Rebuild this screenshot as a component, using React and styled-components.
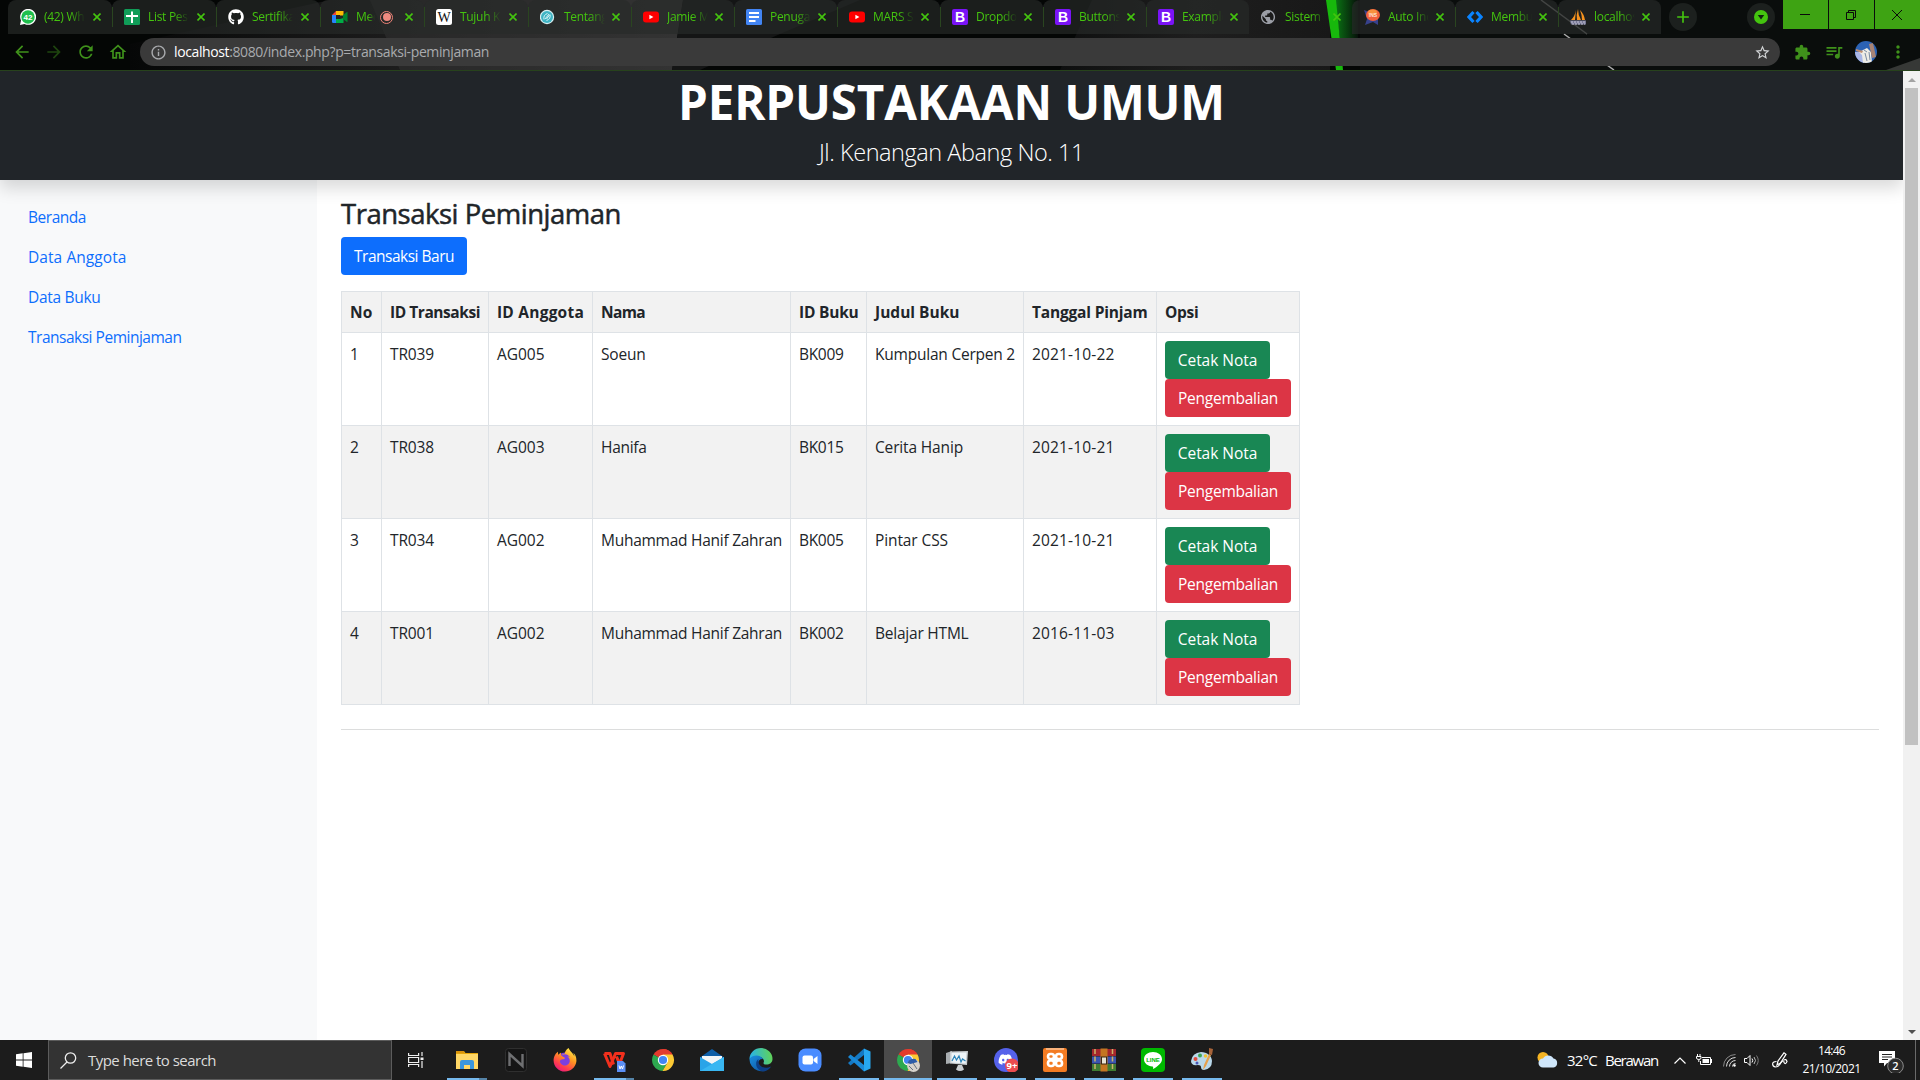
import React, { useLayoutEffect, useRef } from "react";
import styled, { createGlobalStyle, css } from "styled-components";
import {
  MdArrowBack, MdArrowForward, MdRefresh, MdOutlineHome, MdInfoOutline, MdStarBorder,
  MdExtension, MdQueueMusic, MdMoreVert, MdAdd, MdPublic,
} from "react-icons/md";
import { FaGithub, FaFirefoxBrowser, FaDiscord } from "react-icons/fa";

const Global = createGlobalStyle`
  *, *::before, *::after { box-sizing: border-box; }
  body { margin: 0; background: #fff; overflow: hidden; }
  svg { display: block; flex: none; }
`;

const FONT = `"Segoe UI", "Open Sans", "Noto Sans", sans-serif`;
const GREEN = "#44c40f";
const ICON_GREEN = "#3f911b";

const FitSpan = styled.span`
  display: inline-block;
  white-space: nowrap;
`;

/* Tracks text so that it occupies the given advance width. */
function Fit({ w, children }) {
  const ref = useRef(null);
  useLayoutEffect(() => {
    const el = ref.current;
    el.style.letterSpacing = "0px";
    const natural = el.getBoundingClientRect().width;
    el.style.letterSpacing = `${(w - natural) / el.textContent.length}px`;
  }, [w, children]);
  return <FitSpan ref={ref}>{children}</FitSpan>;
}

const Screen = styled.div`
  width: 1920px;
  height: 1080px;
  display: grid;
  grid-template-rows: 71px 969px 40px;
  font-family: ${FONT};
  overflow: hidden;
`;

/* ---------- browser chrome ---------- */
const Chrome = styled.header`
  position: relative;
  display: flex;
  flex-direction: column;
  background: #050706;
  border-bottom: 1px solid #27421c;
  isolation: isolate;
`;
const ThemeArt = styled.svg`
  position: absolute;
  inset: 0;
  z-index: -1;
`;
const TabStrip = styled.div`
  height: 34px;
  display: flex;
  align-items: stretch;
  padding-left: 8px;
`;
const Tab = styled.div`
  width: ${(p) => p.$w}px;
  flex: none;
  display: flex;
  align-items: center;
  padding-left: 12px;
  position: relative;
  color: ${GREEN};
  border-radius: 8px 8px 0 0;
  background: ${(p) => (p.$active ? "transparent" : "rgba(40, 42, 41, 0.66)")};
  ${(p) => p.$divided && css`
    &::after {
      content: "";
      position: absolute;
      right: -1px;
      top: 7px;
      width: 1px;
      height: 20px;
      background: #2f7a10;
    }
  `}
`;
const Favicon = styled.span`
  width: 16px;
  height: 16px;
  margin-right: 8px;
  flex: none;
`;
const TabTitle = styled.span`
  width: ${(p) => p.$w}px;
  flex: none;
  overflow: hidden;
  white-space: nowrap;
  font-size: 12px;
  line-height: 18px;
  letter-spacing: -0.3px;
  mask-image: linear-gradient(90deg, #000 62%, transparent 100%);
`;
const Recording = styled.span`
  width: 13px;
  height: 13px;
  margin-left: 5px;
  border: 1px solid #ee8277;
  border-radius: 50%;
  padding: 1.5px;
  &::before {
    content: "";
    display: block;
    height: 100%;
    border-radius: 50%;
    background: #f08a80;
  }
`;
const TabClose = styled.span`
  width: 8px;
  margin-left: auto;
  margin-right: 11px;
`;
const RoundButton = styled.span`
  width: 28px;
  height: 28px;
  margin: 3px 0 0 ${(p) => p.$ml}px;
  border-radius: 50%;
  background: #1c201e;
  display: grid;
  place-items: center;
`;
const WindowButtons = styled.div`
  display: flex;
  gap: 1px;
  margin-left: auto;
  height: 29px;
`;
const WindowButton = styled.span`
  width: 45px;
  padding-right: 1px;
  background: #3ea313;
  display: grid;
  place-items: center;
`;
const Toolbar = styled.div`
  height: 36px;
  display: flex;
  align-items: center;
  color: ${ICON_GREEN};
`;
const ToolCell = styled.span`
  width: 32px;
  display: grid;
  place-items: center;
  opacity: ${(p) => (p.$dim ? 0.45 : 1)};
`;
const NavGroup = styled.div`
  display: flex;
  padding-left: 6px;
  width: 140px;
`;
const Omnibox = styled.div`
  width: 1640px;
  height: 28px;
  border-radius: 14px;
  background: #3a3a3a;
  display: flex;
  align-items: center;
  padding: 0 9px 0 10px;
  color: #a9abae;
  font-size: 14px;
`;
const Url = styled.span`
  margin-left: 7px;
  line-height: 20px;
  flex: 1;
`;
const Host = styled.span`
  color: #fff;
`;
const ExtGroup = styled.div`
  display: flex;
  padding-left: 6px;
`;

const CloseMark = () => (
  <svg width="8" height="8" viewBox="0 0 8 8">
    <path d="M0.500 0.500l7 7M7.500 0.500l-7 7" stroke="currentColor" strokeWidth="1.600" />
  </svg>
);
const B = () => (
  <svg width="16" height="16" viewBox="0 0 16 16">
    <rect width="16" height="16" rx="2" fill="#7a13f7" />
    <text x="8" y="13" textAnchor="middle" fill="#fff" fontFamily="Liberation Sans, sans-serif" fontWeight="700" fontSize="14">B</text>
  </svg>
);
const YouTube = () => (
  <svg width="16" height="16" viewBox="0 0 16 16">
    <rect y="2.5" width="16" height="11" rx="3" fill="#f00" />
    <path d="M6.4 5.7v4.6L10.4 8z" fill="#fff" />
  </svg>
);
const FAVICONS = {
  whatsapp: (
    <svg width="16" height="16" viewBox="0 0 16 16">
      <path d="M0 16l1-4.500A8 8 0 1 1 4.500 15z" fill="#fff" />
      <circle cx="8" cy="8" r="6.700" fill="#1fbf4d" />
      <text x="8" y="11" textAnchor="middle" fill="#fff" fontFamily="Liberation Sans, sans-serif" fontWeight="700" fontSize="8">42</text>
    </svg>
  ),
  sheets: (
    <svg width="16" height="16" viewBox="0 0 16 16">
      <rect width="16" height="16" rx="1.500" fill="#109d58" />
      <path d="M7 2.500h2V6h5v2H9v6H7V8H2V6h5z" fill="#fff" />
    </svg>
  ),
  github: <FaGithub size={16} color="#fff" />,
  meet: (
    <svg width="16" height="16" viewBox="0 0 16 16">
      <path d="M0 6l4-4v4z" fill="#ea4335" />
      <path d="M4 2h7.500v4.500H8V6H4z" fill="#fbbc04" />
      <path d="M0 6h4v8H1.200Q0 14 0 12.800z" fill="#2684fc" />
      <path d="M4 10h4l3.500-1v5H4z" fill="#00ac47" />
      <path d="M11 6l4-3q1 0 .5 1v8q.5 1-.5 1l-4-3z" fill="#00832d" />
    </svg>
  ),
  wiki: (
    <svg width="16" height="16" viewBox="0 0 16 16">
      <rect width="16" height="16" rx="2.500" fill="#fff" />
      <text x="8" y="13" textAnchor="middle" fill="#111" fontFamily="Liberation Serif, serif" fontSize="14">W</text>
    </svg>
  ),
  teal: (
    <svg width="16" height="16" viewBox="0 0 16 16">
      <circle cx="7" cy="8" r="7.200" fill="#d7f0f3" />
      <circle cx="7" cy="8" r="6" fill="#40b4c4" />
      <path d="M4 10.500Q3 6 7.500 4.500M10 5.500q1 4.500-3.500 6M5 10l4-5M6.500 10l3-4" stroke="#d8f3f6" strokeWidth="1" fill="none" />
    </svg>
  ),
  youtube: <YouTube />,
  docs: (
    <svg width="16" height="16" viewBox="0 0 16 16">
      <rect width="16" height="16" rx="1.500" fill="#4285f4" />
      <path d="M3 3h10v2H3zM3 7h10v2H3zM3 11h6.500v2H3z" fill="#fff" />
    </svg>
  ),
  bootstrap: <B />,
  globe: (
    <svg width="16" height="16" viewBox="0 0 16 16">
      <MdPublic x="-1.500" y="-0.500" size={17} color="#9b9ea6" />
    </svg>
  ),
  ins: (
    <svg width="16" height="16" viewBox="0 0 16 16">
      <path d="M0 1l5 2 9 0 0 13-5-3-8 3 2-6z" fill="#37418c" />
      <ellipse cx="9" cy="6" rx="7" ry="6" fill="#f2603c" />
      <ellipse cx="8.500" cy="3.500" rx="4.500" ry="3" fill="#f8913e" />
      <text x="9" y="8" textAnchor="middle" fill="#ffe0d0" fontFamily="Liberation Sans, sans-serif" fontWeight="700" fontSize="5">INS</text>
    </svg>
  ),
  code: (
    <svg width="16" height="16" viewBox="0 0 16 16">
      <path d="M6.500 3L2 8l4.500 5M9.500 3L14 8l-4.500 5" stroke="#0a84ff" strokeWidth="3.200" fill="none" />
    </svg>
  ),
  pma: (
    <svg width="16" height="16" viewBox="0 0 16 16">
      <path d="M6 1Q5 7 1 11h4zM8 0q-2 6-1 11l4 0Q8 6 8 0zM10 1q4 4 5 10h-3q0-5-2-10z" fill="#f6921e" />
      <path d="M0 11.500h16v4H1z" fill="#777796" />
      <path d="M1 13h14M2 15h13" stroke="#c7c7d6" strokeWidth="1" strokeDasharray="2 1" />
    </svg>
  ),
};

const TABS = [
  ["whatsapp", "(42) WhatsApp"], ["sheets", "List Peserta"], ["github", "Sertifikat"],
  ["meet", "Meet", "rec"], ["wiki", "Tujuh Keajaiban"], ["teal", "Tentang"],
  ["youtube", "Jamie Miller"], ["docs", "Penugasan"], ["youtube", "MARS SMK"],
  ["bootstrap", "Dropdowns"], ["bootstrap", "Buttons"], ["bootstrap", "Example"],
  ["globe", "Sistem", "active"], ["ins", "Auto Inc"], ["code", "Membuat"],
  ["pma", "localhost"],
];

const Art = () => (
  <ThemeArt width="1920" height="70" viewBox="0 0 1920 70">
    <defs>
      <linearGradient id="grayL" x1="0" x2="1">
        <stop offset="0" stopColor="#060707" /><stop offset="0.5" stopColor="#1d1d1d" /><stop offset="1" stopColor="#333" />
      </linearGradient>
      <linearGradient id="grayM" x1="0" x2="1">
        <stop offset="0" stopColor="#0e0f0f" /><stop offset="0.5" stopColor="#1e1e1e" /><stop offset="1" stopColor="#181818" />
      </linearGradient>
      <linearGradient id="glow" x1="0" x2="1">
        <stop offset="0" stopColor="#0a7a14" /><stop offset="1" stopColor="#07100a" />
      </linearGradient>
    </defs>
    <rect width="1920" height="70" fill="#040605" />
    <path d="M130 44L330 0H683L672 70H130z" fill="url(#grayL)" />
    <path d="M370 0H683L672 70H400z" fill="#333" fillOpacity="0.5" />
    <path d="M683 0H860L780 34 700 70H672z" fill="#141515" />
    <path d="M1092 0H1330V70H1060z" fill="url(#grayM)" />
    <path d="M1334 0H1358V38H1340z" fill="url(#glow)" />
    <path d="M1326 0h10l7 70h-7z" fill="#17b80c" />
    <path d="M1360 0H1920V70H1360z" fill="#0a0d0c" />
    <path d="M1541 0L1587 34" stroke="#777" strokeWidth="1.500" />
    <path d="M1564 34l50 36" stroke="#aaa" strokeWidth="1.500" />
    <path d="M1886 70L1920 58V70z" fill="#363836" />
  </ThemeArt>
);

const BrowserChrome = () => (
  <Chrome>
    <Art />
    <TabStrip>
      {TABS.map(([icon, title, flag], i) => (
        <Tab key={i} $w={i < 5 ? 104 : 103} $active={flag === "active"} $divided={i !== 11 && i !== 12 && i !== 15}>
          <Favicon>{FAVICONS[icon]}</Favicon>
          <TabTitle $w={flag === "rec" ? 19 : 41}>{title}</TabTitle>
          {flag === "rec" && <Recording />}
          <TabClose><CloseMark /></TabClose>
        </Tab>
      ))}
      <RoundButton $ml={8}><MdAdd size={20} color={GREEN} /></RoundButton>
      <RoundButton $ml={50}>
        <svg width="14" height="14" viewBox="0 0 14 14">
          <circle cx="7" cy="7" r="7" fill={GREEN} />
          <path d="M3.800 5h6.400L7 9.500z" fill="#122010" />
        </svg>
      </RoundButton>
      <WindowButtons>
        <WindowButton><svg width="10" height="10"><path d="M0 4.500h10" stroke="#0a0a0a" /></svg></WindowButton>
        <WindowButton>
          <svg width="10" height="10"><path d="M.5 2.500h7v7h-7zM2.500 2.500v-2h7v7h-2" fill="none" stroke="#0a0a0a" /></svg>
        </WindowButton>
        <WindowButton><svg width="10" height="10"><path d="M0 0l10 10M10 0L0 10" stroke="#0a0a0a" /></svg></WindowButton>
      </WindowButtons>
    </TabStrip>
    <Toolbar>
      <NavGroup>
        <ToolCell><MdArrowBack size={20} /></ToolCell>
        <ToolCell $dim><MdArrowForward size={20} /></ToolCell>
        <ToolCell><MdRefresh size={20} /></ToolCell>
        <ToolCell><MdOutlineHome size={20} /></ToolCell>
      </NavGroup>
      <Omnibox>
        <MdInfoOutline size={17} />
        <Url><Fit w={315}><Host>localhost</Host>:8080/index.php?p=transaksi-peminjaman</Fit></Url>
        <MdStarBorder size={17} color="#d2d4d6" />
      </Omnibox>
      <ExtGroup>
        <ToolCell><MdExtension size={17} /></ToolCell>
        <ToolCell><MdQueueMusic size={20} /></ToolCell>
        <ToolCell>
          <svg width="22" height="22" viewBox="0 0 22 22">
            <defs><clipPath id="av"><circle cx="11" cy="11" r="11" /></clipPath></defs>
            <g clipPath="url(#av)">
              <rect width="22" height="22" fill="#2b62b4" />
              <path d="M0 11h9v11H0z" fill="#a9b6e6" />
              <path d="M8 9l4-2 4 4 1 11H8L7 14 4 11z" fill="#eeece6" />
              <path d="M14 3l4-1 3 14-4 1z" fill="#a88374" />
              <path d="M1 8l7 2-1 2-6-2z" fill="#c08f72" />
              <path d="M10 12l2 8M14 11l1 8M9 9l3 2" stroke="#5d7291" strokeWidth="0.800" />
            </g>
          </svg>
        </ToolCell>
        <ToolCell><MdMoreVert size={20} /></ToolCell>
      </ExtGroup>
    </Toolbar>
  </Chrome>
);

/* ---------- page ---------- */
const Viewport = styled.div`
  display: grid;
  grid-template-columns: 1903px 17px;
`;
const Page = styled.div`
  display: flex;
  flex-direction: column;
  overflow: hidden;
  color: #212529;
  font-size: 15.500px;
  line-height: 25px;
  background: #fff;
`;
const Banner = styled.div`
  height: 109px;
  flex: none;
  background: #212529;
  color: #fff;
  display: flex;
  flex-direction: column;
  align-items: center;
  box-shadow: 0 8px 16px rgba(0, 0, 0, 0.15);
  z-index: 1;
`;
const BannerTitle = styled.h1`
  margin: 2px 0 0;
  font-size: 47.500px;
  line-height: 58px;
  font-weight: 700;
`;
const BannerText = styled.p`
  margin: 3px 0 0;
  font-size: 23.500px;
  line-height: 36px;
  font-weight: 300;
`;
const Columns = styled.div`
  flex: 1;
  display: grid;
  grid-template-columns: 317px 1fr;
`;
const Sidebar = styled.nav`
  background: #f8f9fa;
  padding: 16px 12px;
  display: flex;
  flex-direction: column;
`;
const NavLink = styled.a`
  padding: 9px 16px 6px;
  height: 40px;
  color: #0d6efd;
`;
const Main = styled.main`
  padding: 17px 24px 0;
  display: flex;
  flex-direction: column;
  align-items: flex-start;
`;
const Heading = styled.h3`
  margin: 0 0 6px;
  font-size: 27.500px;
  line-height: 34px;
  font-weight: 500;
  -webkit-text-stroke: 0.500px currentColor;
`;
const TONES = { primary: "#0d6efd", success: "#198754", danger: "#dc3545" };
const Button = styled.button`
  display: flex;
  align-items: center;
  justify-content: center;
  width: ${(p) => p.$w}px;
  height: 38px;
  padding: 0;
  border: 0;
  border-radius: 4px;
  background: ${(p) => TONES[p.$tone]};
  color: #fff;
  font: inherit;
`;
const Table = styled.table`
  margin-top: 16px;
  width: 959px;
  table-layout: fixed;
  border-collapse: collapse;
  tr:nth-child(odd) { background: #fff; }
  tr:nth-child(even), thead tr:nth-child(n) { background: #f2f2f2; }
`;
const HeadCell = styled.th`
  height: 41px;
  padding: 8px 8px 7px;
  border: 1px solid #dee2e6;
  text-align: left;
  font-weight: 700;
`;
const Cell = styled.td`
  height: 93px;
  padding: ${(p) => (p.$actions ? 8 : 9)}px 8px 8px;
  border: 1px solid #dee2e6;
  vertical-align: top;
`;
const Rule = styled.hr`
  width: 1538px;
  height: 1px;
  margin: 24px 0 0;
  border: 0;
  background: #dcdddd;
`;
const Scrollbar = styled.div`
  background: #f1f1f1;
  display: flex;
  flex-direction: column;
  align-items: center;
`;
const ScrollArrow = styled.span`
  width: 17px;
  height: 17px;
  margin-top: ${(p) => (p.$end ? "auto" : 0)};
  display: grid;
  place-items: center;
`;
const Thumb = styled.div`
  width: 13px;
  height: 657px;
  background: #c1c1c1;
`;

const LINKS = [["Beranda", 58], ["Data Anggota", 98.5], ["Data Buku", 72.5], ["Transaksi Peminjaman", 153.5]];
const COLS = [
  ["No", 40, 22.5], ["ID Transaksi", 107, 90], ["ID Anggota", 104, 87], ["Nama", 198, 44],
  ["ID Buku", 76, 59.5], ["Judul Buku", 157, 84.5], ["Tanggal Pinjam", 133, 115.5], ["Opsi", 143, 33.5],
];
const ROWS = [
  ["1", "TR039", "AG005", ["Soeun", 44.5], "BK009", ["Kumpulan Cerpen 2", 140], "2021-10-22"],
  ["2", "TR038", "AG003", ["Hanifa", 45.5], "BK015", ["Cerita Hanip", 88], "2021-10-21"],
  ["3", "TR034", "AG002", ["Muhammad Hanif Zahran", 181], "BK005", ["Pintar CSS", 73], "2021-10-21"],
  ["4", "TR001", "AG002", ["Muhammad Hanif Zahran", 181], "BK002", ["Belajar HTML", 93.5], "2016-11-03"],
];
const CELL_WIDTHS = [9, 44, 47.5, null, 44.5, null, 82.5];

const WebPage = () => (
  <Viewport>
    <Page>
      <Banner>
        <BannerTitle><Fit w={547}>PERPUSTAKAAN UMUM</Fit></BannerTitle>
        <BannerText><Fit w={265}>Jl. Kenangan Abang No. 11</Fit></BannerText>
      </Banner>
      <Columns>
        <Sidebar>
          {LINKS.map(([t, w]) => <NavLink key={t}><Fit w={w}>{t}</Fit></NavLink>)}
        </Sidebar>
        <Main>
          <Heading><Fit w={280}>Transaksi Peminjaman</Fit></Heading>
          <Button $tone="primary" $w={126}><Fit w={100}>Transaksi Baru</Fit></Button>
          <Table>
            <colgroup>{COLS.map(([n, w]) => <col key={n} width={w} />)}</colgroup>
            <thead>
              <tr>{COLS.map(([n, , tw]) => <HeadCell key={n}><Fit w={tw}>{n}</Fit></HeadCell>)}</tr>
            </thead>
            <tbody>
              {ROWS.map((r) => (
                <tr key={r[0]}>
                  {r.map((c, i) => (
                    <Cell key={i}>
                      {Array.isArray(c) ? <Fit w={c[1]}>{c[0]}</Fit> : <Fit w={CELL_WIDTHS[i]}>{c}</Fit>}
                    </Cell>
                  ))}
                  <Cell $actions>
                    <Button $tone="success" $w={105}><Fit w={79.500}>Cetak Nota</Fit></Button>
                    <Button $tone="danger" $w={126}><Fit w={100}>Pengembalian</Fit></Button>
                  </Cell>
                </tr>
              ))}
            </tbody>
          </Table>
          <Rule />
        </Main>
      </Columns>
    </Page>
    <Scrollbar>
      <ScrollArrow><svg width="8" height="4"><path d="M0 4l4-4 4 4z" fill="#a3a3a3" /></svg></ScrollArrow>
      <Thumb />
      <ScrollArrow $end><svg width="8" height="4"><path d="M0 0l4 4 4-4z" fill="#505050" /></svg></ScrollArrow>
    </Scrollbar>
  </Viewport>
);

/* ---------- taskbar ---------- */
const Taskbar = styled.footer`
  display: flex;
  background: #1c1c1c;
  color: #fff;
`;
const Slot = styled.span`
  width: ${(p) => p.$w}px;
  margin-right: ${(p) => p.$mr || 0}px;
  flex: none;
  height: 40px;
  display: grid;
  place-items: center;
`;
const SearchBox = styled.div`
  width: 344px;
  background: #333;
  border: 1px solid #5c5c5c;
  display: flex;
  align-items: center;
  padding-left: 11px;
  gap: 11px;
  color: #dcdcdc;
  font-size: 15px;
`;
const TaskButton = styled.span`
  width: 49px;
  height: 40px;
  padding-right: 1px;
  display: flex;
  flex-direction: column;
  align-items: center;
  justify-content: flex-end;
  background: ${(p) => (p.$active ? "#4b4b4b" : "transparent")};
  background-clip: content-box;
`;
const Glyph = styled.span`
  height: 38px;
  width: 24px;
  display: grid;
  place-items: center;
  padding-top: 2px;
`;
const Underline = styled.span`
  width: ${(p) => (p.$kind === "active" ? 48 : 40)}px;
  height: 2px;
  background: ${(p) =>
    !p.$kind ? "transparent"
      : p.$kind === "multi" ? "linear-gradient(90deg, #76b9ed 32px, #5584a8 32px)"
        : "#76b9ed"};
`;
const Tray = styled.div`
  margin-left: auto;
  display: flex;
  font-size: 15px;
  align-items: center;
`;
const Clock = styled.div`
  width: 71px;
  display: flex;
  flex-direction: column;
  align-items: center;
  font-size: 12px;
  line-height: 18px;
  padding-bottom: 1px;
`;
const TrayText = styled.span`
  width: ${(p) => p.$w}px;
  line-height: 20px;
`;
const ShowDesktop = styled.span`
  width: 5px;
  height: 40px;
  border-left: 1px solid #6a6a6a;
`;

const ChromeLogo = ({ children }) => (
  <svg width="24" height="24" viewBox="0 0 24 24">
    <path d="M12 12L2.500 6.500A11 11 0 0 1 21.500 6.500z" fill="#e33b2e" />
    <path d="M12 1a11 11 0 0 1 9.500 5.500H12z" fill="#e33b2e" />
    <path d="M12 12L2.500 6.500A11 11 0 0 0 11.500 23l5-8.500z" fill="#2da94f" />
    <path d="M12 12l4.500 2.500L11.500 23A11 11 0 0 0 21.500 6.500H12z" fill="#fcc934" />
    <circle cx="12" cy="12" r="5.200" fill="#fff" />
    <circle cx="12" cy="12" r="4.100" fill="#4285f4" />
    {children}
  </svg>
);

const APPS = [
  ["multi", <svg width="24" height="24" viewBox="0 0 24 24">
    <path d="M1 3h8l1.500 2H23v16H1z" fill="#e5a50a" /><path d="M1 6h22v15H1z" fill="#ffd766" />
    <path d="M5 21v-7q0-2 2-2h10q2 0 2 2v7h-4v-4H9v4z" fill="#3a96dd" /><path d="M1 3h8v2H1z" fill="#d9930b" />
  </svg>],
  [null, <svg width="24" height="24" viewBox="0 0 24 24">
    <rect x="1.500" y="0.500" width="21" height="23" rx="3" fill="#151515" stroke="#2f2f2f" />
    <path d="M5.500 18V6l13 12V6" fill="none" stroke="#6f7072" strokeWidth="2.400" />
  </svg>],
  [null, <svg width="24" height="24" viewBox="0 0 24 24">
    <defs>
      <linearGradient id="ff" x1="0.800" y1="0" x2="0.200" y2="1">
        <stop offset="0" stopColor="#fff44f" /><stop offset="0.400" stopColor="#ff9620" />
        <stop offset="0.750" stopColor="#ff3b4f" /><stop offset="1" stopColor="#e31587" />
      </linearGradient>
    </defs>
    <circle cx="12" cy="12.500" r="8" fill="#7a3fe0" />
    <FaFirefoxBrowser x="0" y="0" size={24} fill="url(#ff)" />
  </svg>],
  ["multi", <svg width="24" height="24" viewBox="0 0 24 24">
    <path d="M2.500 5.500H8l3.500 11" fill="none" stroke="#f2301d" strokeWidth="3" strokeLinejoin="round" />
    <path d="M2.500 5.500L8 18.500 13.500 5.500H21.500L17.500 16 14.500 8.500" fill="none" stroke="#f2301d" strokeWidth="3" strokeLinejoin="round" />
    <path d="M15 13h6l2.500 2.500V24H15z" fill="#5b8ff5" />
    <path d="M17 17.500l1 3.500 1.300-3 1.200 3 1-3.500" fill="none" stroke="#fff" strokeWidth="1" />
  </svg>],
  [null, <ChromeLogo />],
  [null, <svg width="24" height="24" viewBox="0 0 24 24">
    <path d="M0 9.500L12 1l12 8.500V22H0z" fill="#0f5fa8" /><path d="M2 8h20v8H2z" fill="#f3f6f8" />
    <path d="M0 9l12 7L24 9v14H0z" fill="#2aa4e8" /><path d="M0 23l24-14v14z" fill="#39b7f2" />
  </svg>],
  [null, <svg width="24" height="24" viewBox="0 0 24 24">
    <defs>
      <linearGradient id="eg" x1="0" y1="0.300" x2="1" y2="0.200"><stop offset="0" stopColor="#28b3e8" /><stop offset="1" stopColor="#62d453" /></linearGradient>
      <linearGradient id="eb" x1="0" y1="0" x2="1" y2="1"><stop offset="0" stopColor="#1a8fe0" /><stop offset="1" stopColor="#0c4a94" /></linearGradient>
    </defs>
    <path d="M0.500 11A11.500 11 0 0 1 23.500 11C23.500 15 20 17 16 16.500 14 16 14.500 14.500 15 13.500 15 9 8 6 0.500 11z" fill="url(#eg)" />
    <path d="M0.500 11C4 6 12 7 14 11 10 10.500 8 14 10 18 12 21 18 22 22 18.500A12 12 0 0 1 0.500 11z" fill="url(#eb)" />
    <path d="M9.500 11C5 14 7 23 15 23.500 18 23 20.500 21 22 18.500 16 22 8 18 9.500 11z" fill="#0d3f86" />
  </svg>],
  [null, <svg width="24" height="24" viewBox="0 0 24 24">
    <rect x="0.500" y="0.500" width="23" height="23" rx="7" fill="#4a8cff" /><rect x="4.500" y="7.500" width="10.500" height="9" rx="2" fill="#fff" />
    <path d="M15.500 11l4-3v8l-4-3z" fill="#fff" />
  </svg>],
  ["open", <svg width="24" height="24" viewBox="0 0 24 24">
    <path d="M17 0.500l6.500 3v17l-6.500 3z" fill="#27a7f0" /><path d="M17 0.500L1 15l2.500 2.500L17 7z" fill="#1479c4" />
    <path d="M17 23.500L1 9l2.500-2.500L17 17z" fill="#1989d8" />
  </svg>],
  ["active", <ChromeLogo>
    <circle cx="17.500" cy="17.500" r="6.500" fill="#d6d2cc" /><path d="M11.500 15q2-5 8-4l2 3-7 2z" fill="#2c5ca8" />
    <path d="M13 18l4 4M17 15l4 6" stroke="#62717f" />
  </ChromeLogo>],
  ["open", <svg width="24" height="24" viewBox="0 0 24 24">
    <path d="M1 5l6-2v12l-6 1z" fill="#a9aeb1" /><path d="M5 3.500L23 3l-1 14-17-1.500z" fill="#c9ced1" />
    <path d="M6.500 5L21.500 4.500l-.8 11-14.200-1z" fill="#edf4f8" /><path d="M7 13l2.500-5 2 4 2.500-4 2 6 1.500-3 3 2" fill="none" stroke="#2b83b8" strokeWidth="1.200" />
    <path d="M13 17h4l2 4.500q-4 3-8 0z" fill="#c9cdd0" />
  </svg>],
  ["open", <svg width="24" height="24" viewBox="0 0 24 24">
    <circle cx="12" cy="12" r="12" fill="#5561ea" /><FaDiscord x="4" y="4" size={15} color="#fff" />
    <circle cx="18" cy="17.500" r="7" fill="#ec4c4e" />
    <text x="18" y="21" textAnchor="middle" fill="#fff" fontSize="9.500" fontWeight="700" fontFamily="Open Sans, sans-serif">9+</text>
  </svg>],
  ["open", <svg width="24" height="24" viewBox="0 0 24 24">
    <rect width="24" height="24" rx="2" fill="#f37b22" /><rect x="3" y="0" width="18" height="2" fill="#f9b27b" />
    <rect x="5" y="6" width="6" height="5" rx="2.500" fill="none" stroke="#fff" strokeWidth="2.600" />
    <rect x="13" y="6" width="6" height="5" rx="2.500" fill="none" stroke="#fff" strokeWidth="2.600" />
    <rect x="5" y="12.500" width="6" height="5.500" rx="2.500" fill="none" stroke="#fff" strokeWidth="2.600" />
    <rect x="13" y="12.500" width="6" height="5.500" rx="2.500" fill="none" stroke="#fff" strokeWidth="2.600" />
    <path d="M10 13.500L14 10" stroke="#fff" strokeWidth="3" />
  </svg>],
  ["open", <svg width="24" height="24" viewBox="0 0 24 24">
    <rect y="1" width="24" height="7" fill="#a3262c" /><rect y="8.500" width="24" height="7" fill="#3a54b0" /><rect y="16" width="24" height="7" fill="#3f7c32" />
    <path d="M3 1v22M20.500 1v22" stroke="#cbb46a" strokeWidth="1.500" strokeDasharray="5 2.500" />
    <rect x="8.500" y="0.500" width="7" height="23" fill="#c47522" /><rect x="9.500" y="9" width="5" height="7" fill="#e9e4d5" stroke="#3b2a14" />
  </svg>],
  ["open", <svg width="24" height="24" viewBox="0 0 24 24">
    <rect width="24" height="24" rx="4" fill="#00b900" />
    <path d="M12 4c5 0 9 3 9 7.200 0 4-5 7.600-9 9.800.3-1.500.3-2.500-.5-2.600C6.500 18 3 15 3 11.200 3 7 7 4 12 4z" fill="#fff" />
    <text x="12" y="13.500" textAnchor="middle" fill="#00b900" fontSize="6" fontWeight="700" fontFamily="Liberation Sans, sans-serif">LINE</text>
  </svg>],
  ["open", <svg width="24" height="24" viewBox="0 0 24 24">
    <path d="M11 4C17 4 22 8 22 13q0 8-8 9-3 0-3-3 0-2-3-2-7 1-7-4Q2 5 11 4z" fill="#b9d8ea" />
    <circle cx="5.500" cy="11" r="2" fill="#df4a3c" /><circle cx="10" cy="7.500" r="2" fill="#3ca556" />
    <circle cx="15.500" cy="8" r="1.800" fill="#f0c22f" /><circle cx="7" cy="15" r="1.500" fill="#4a58b6" />
    <path d="M21 7l-5 11-3 4 1-5 5-11z" fill="#e6a04a" /><path d="M19 0l4 1-1 6-3-1z" fill="#a8643a" />
  </svg>],
];

const TaskbarView = () => (
  <Taskbar>
    <Slot $w={48}>
      <svg width="16" height="16" viewBox="0 0 16 16">
        <path d="M0 2.200L6.700 1.300V7.600H0zM7.500 1.200L16 0V7.600H7.500zM0 8.400H6.700v6.300L0 13.800zM7.500 8.400H16V16L7.500 14.800z" fill="#fff" />
      </svg>
    </Slot>
    <SearchBox>
      <svg width="17" height="17" viewBox="0 0 17 17" fill="none" stroke="#eee" strokeWidth="1.300">
        <circle cx="10.500" cy="6" r="5.200" /><path d="M7 10L0.500 16.500" />
      </svg>
      <Fit w={128}>Type here to search</Fit>
    </SearchBox>
    <Slot $w={48} $mr={3}>
      <svg width="16" height="16" viewBox="0 0 16 16" fill="none" stroke="#eee" strokeWidth="1.200">
        <path d="M.6 1v2.500h10V1M.6 15v-2.500h10V15M.6 5.500h10v5H.6zM14 0v4M14 9v7" /><path d="M12.500 5.500h3v2.500h-3z" fill="#eee" stroke="none" />
      </svg>
    </Slot>
    {APPS.map(([kind, icon], i) => (
      <TaskButton key={i} $active={kind === "active"}>
        <Glyph>{icon}</Glyph>
        <Underline $kind={kind} />
      </TaskButton>
    ))}
    <Tray>
      <Slot $w={21} $mr={9}>
        <svg width="21" height="16" viewBox="0 0 21 16">
          <circle cx="6" cy="5.500" r="5.500" fill="#f5b422" />
          <path d="M6 15.500a4.500 4.500 0 0 1 0-9A6 6 0 0 1 16.500 6.500a4.600 4.600 0 0 1 0 9z" fill="#cfe6fa" />
        </svg>
      </Slot>
      <TrayText $w={38}><Fit w={30}>32°C</Fit></TrayText>
      <TrayText $w={64}><Fit w={53}>Berawan</Fit></TrayText>
      <Slot $w={22}><svg width="12" height="7"><path d="M.5 6.500L6 1l5.500 5.500" fill="none" stroke="#fff" strokeWidth="1.200" /></svg></Slot>
      <Slot $w={26}>
        <svg width="16" height="12" viewBox="0 0 16 12">
          <path d="M6 3.500h8.500v7H4.500V7" fill="none" stroke="#fff" /><path d="M6.500 5h6.500v4H6.500zM15 5h1v4h-1z" fill="#fff" />
          <path d="M1.500 0v2.500M4 0v2.500M.5 2.500h4.500v1.500q0 1.500-2.200 1.500T.5 4zM2.800 5.500V8" stroke="#fff" fill="none" />
        </svg>
      </Slot>
      <Slot $w={24}>
        <svg width="13" height="13" viewBox="0 0 13 13" fill="none" stroke="#ddd">
          <path d="M.5 12.500A12 12 0 0 1 12.500 .5" stroke="#888" /><path d="M3.500 12.500a9 9 0 0 1 9-9M6.500 12.500a6 6 0 0 1 6-6M9.500 12.500a3 3 0 0 1 3-3" /><circle cx="11.500" cy="11.500" r="1.200" fill="#fff" stroke="none" />
        </svg>
      </Slot>
      <Slot $w={22}>
        <svg width="16" height="13" viewBox="0 0 16 13" fill="none" stroke="#fff">
          <path d="M.5 4.500H3l3-3v10l-3-3H.5z" /><path d="M8 4.500q1.500 2 0 4" /><path d="M10 3q3 3.500 0 7" stroke="#bbb" /><path d="M12.500 1.500q3.500 5 0 10" stroke="#777" />
        </svg>
      </Slot>
      <Slot $w={33}>
        <svg width="16" height="16" viewBox="0 0 16 16" fill="none" stroke="#fff" strokeWidth="1.200">
          <path d="M5 13L6 9 12 .8 14 2.300 8.500 11z" /><path d="M4.500 9.500Q.6 9.500.6 12t3 3Q7 15 9 10.500q3-3.500 3 0 1.500 2.500 3-1-1-3-3-1.500" />
        </svg>
      </Slot>
      <Clock>
        <Fit w={27}>14:46</Fit>
        <Fit w={58}>21/10/2021</Fit>
      </Clock>
      <Slot $w={48}>
        <svg width="26" height="26" viewBox="0 0 26 26">
          <path d="M1 4h16v12H9l-3 3.500V16H1z" fill="#fff" />
          <path d="M4 7.500h10M4 10h10M4 12.500h6" stroke="#222" />
          <circle cx="17.500" cy="19" r="7.800" fill="#2b2b2b" stroke="#8a8a8a" />
          <text x="17.500" y="23" textAnchor="middle" fill="#fff" fontSize="11" fontWeight="600" fontFamily="Open Sans, sans-serif">2</text>
        </svg>
      </Slot>
      <ShowDesktop />
    </Tray>
  </Taskbar>
);

export default function App() {
  return (
    <Screen>
      <Global />
      <BrowserChrome />
      <WebPage />
      <TaskbarView />
    </Screen>
  );
}
